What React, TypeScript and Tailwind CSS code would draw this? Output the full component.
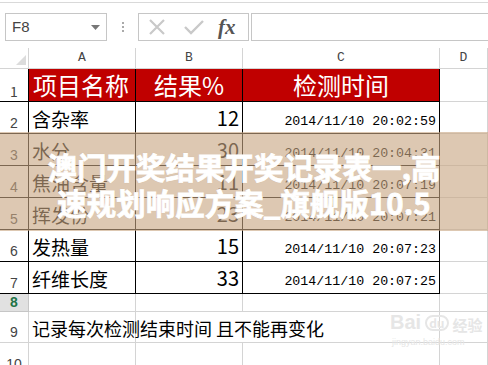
import React from 'react'

const cjk = { fontFamily: '"Noto Sans CJK SC", "Liberation Sans", sans-serif' }
const mono = { fontFamily: '"Liberation Mono", "DejaVu Sans Mono", monospace' }

type Row = { n: string; a: string; b: string; c: string }

const rows: Row[] = [
    { n: '2', a: '含杂率', b: '12', c: '2014/11/10 20:02:59' },
    { n: '3', a: '水分', b: '30', c: '2014/11/10 20:04:31' },
    { n: '4', a: '焦油含量', b: '11', c: '2014/11/10 20:07:19' },
    { n: '5', a: '挥发份', b: '23', c: '2014/11/10 20:07:21' },
    { n: '6', a: '发热量', b: '15', c: '2014/11/10 20:07:23' },
    { n: '7', a: '纤维长度', b: '33', c: '2014/11/10 20:07:25' },
]

const Toolbar = () => (
    <div>
        <div className='h-[3px] border-b border-[#d9d9d9]' />
        <div className='flex items-center pl-[5px] pt-[10px] h-[38px]'>
            <div className='w-[102px] h-[28px] border border-[#c6c6c6] flex items-center justify-between pl-[6px] pr-[6px]'>
                <span className='text-[15px] text-[#444]' style={{ fontFamily: '"Liberation Sans", sans-serif' }}>F8</span>
                <svg width='9' height='5' viewBox='0 0 9 5'>
                    <polygon points='0,0 9,0 4.5,5' fill='#777' />
                </svg>
            </div>
            <div className='w-[31px] flex flex-col items-center gap-[2px]'>
                <span className='w-[2px] h-[2px] bg-[#aaa]' />
                <span className='w-[2px] h-[2px] bg-[#aaa]' />
                <span className='w-[2px] h-[2px] bg-[#aaa]' />
            </div>
            <div className='w-[111px] h-[28px] border border-[#c6c6c6] flex items-center'>
                <svg width='18' height='16' viewBox='0 0 18 16' className='ml-[9px]'>
                    <path d='M2 1 L16 15 M16 1 L2 15' stroke='#c9c9c9' strokeWidth='2.2' fill='none' />
                </svg>
                <svg width='20' height='16' viewBox='0 0 20 16' className='ml-[18px]'>
                    <path d='M1 8 L7 14 L19 2' stroke='#c9c9c9' strokeWidth='2.4' fill='none' />
                </svg>
                <span className='ml-[14px] text-[21px] italic font-bold text-[#555] leading-none' style={{ fontFamily: '"Liberation Serif", serif' }}>fx</span>
            </div>
            <div className='ml-[2px] flex-1 h-[28px] border border-r-0 border-[#c6c6c6]' />
        </div>
    </div>
)

const App = () => {
    const grid = 'grid grid-cols-[29px_107px_107px_197px_1fr]'
    const g = 'border-r border-b border-[#d4d4d4]'
    const rowNum = 'flex items-end justify-center pb-[3px] text-[14px] text-[#444] leading-none'
    return (
        <div className='relative w-[488px] h-[365px] overflow-hidden bg-white' style={cjk}>
            <Toolbar />
            <div className='mt-[7px]'>
                {/* column headers */}
                <div className={`${grid} h-[21px]`}>
                    <div className={`${g} relative`}>
                        <svg width='10' height='10' viewBox='0 0 10 10' className='absolute right-[2px] bottom-[3px]'>
                            <polygon points='10,0 10,10 0,10' fill='#dcdcdc' />
                        </svg>
                    </div>
                    {['A', 'B', 'C', 'D'].map((l) => (
                        <div key={l} className={`${g} flex items-center justify-center text-[13px] text-[#444]`} style={mono}>{l}</div>
                    ))}
                </div>
                {/* row 1 header */}
                <div className={`${grid} h-[33px]`}>
                    <div className={`${rowNum} border-r border-b border-black`}>1</div>
                    <div className='bg-[#c00000] border-r border-b border-black text-white text-[24px] leading-none flex items-center pl-[4px]'>项目名称</div>
                    <div className='bg-[#c00000] border-r border-b border-black text-white text-[24px] leading-none flex items-center justify-center'>结果%</div>
                    <div className='bg-[#c00000] border-r border-b border-black text-white text-[24px] leading-none flex items-center justify-center'>检测时间</div>
                    <div className={g} />
                </div>
                {rows.map((r) => (
                    <div key={r.n} className={`${grid} h-[32px]`}>
                        <div className={`${rowNum} border-r border-b border-black`} style={{ fontFamily: '"Liberation Sans", sans-serif' }}>{r.n}</div>
                        <div className='border-r border-b border-black text-black text-[19px] leading-none flex items-end pb-[5px] pl-[3px]'>{r.a}</div>
                        <div className='border-r border-b border-black text-black text-[20px] leading-none flex items-end justify-end pb-[5px] pr-[3px]'>{r.b}</div>
                        <div className='border-r border-b border-black text-black text-[13.3px] leading-none flex items-end justify-end pb-[5px] pr-[3px]' style={mono}>{r.c}</div>
                        <div className={g} />
                    </div>
                ))}
                {/* row 8 selected */}
                <div className={`${grid} h-[18px]`}>
                    <div className='flex items-end justify-center pb-[2px] text-[14px] font-bold text-[#217346] leading-none bg-[#e1e1e1] border-r border-b border-[#c6c6c6]' style={{ fontFamily: '"Liberation Sans", sans-serif' }}>8</div>
                    <div className={g} />
                    <div className={g} />
                    <div className={g} />
                    <div className={g} />
                </div>
                <div className={`${grid} h-[31px]`}>
                    <div className={g + ' ' + rowNum} style={{ fontFamily: '"Liberation Sans", sans-serif' }}>9</div>
                    <div className={`${g} relative overflow-visible`}>
                        <span className='absolute left-[3px] bottom-[5px] whitespace-nowrap text-[18px] leading-none text-black'>记录每次检测结束时间 且不能再变化</span>
                    </div>
                    <div className='border-b border-[#d4d4d4]' />
                    <div className={g} />
                    <div className={g} />
                </div>
                <div className={`${grid} h-[32px]`}>
                    <div className={g + ' ' + rowNum} style={{ fontFamily: '"Liberation Sans", sans-serif' }}>10</div>
                    <div className={g} />
                    <div className={g} />
                    <div className={g} />
                    <div className={g} />
                </div>
            </div>

            {/* overlay title band */}
            <div className='absolute left-0 right-0 top-[132px] h-[99px] bg-[rgba(200,166,130,0.62)] flex flex-col items-center justify-center pt-[4px]'>
                <div className='text-white font-bold text-[29.5px] leading-[36px] text-center [-webkit-text-stroke:0.8px_white] [text-shadow:0_0_1px_rgba(120,90,60,0.35)]'>
                    澳门开奖结果开奖记录表一,高
                </div>
                <div className='text-white font-bold text-[29.5px] leading-[36px] text-center [-webkit-text-stroke:0.8px_white] [text-shadow:0_0_1px_rgba(120,90,60,0.35)]'>
                    速规划响应方案_旗舰版10.5
                </div>
            </div>

            {/* watermark */}
            <div className='absolute left-[390px] top-[312px] text-[#e6e6e6] leading-none'>
                <div className='flex items-end gap-[4px]'>
                    <span className='text-[20px] font-bold' style={{ fontFamily: '"Liberation Sans", sans-serif' }}>Bai</span>
                    <span className='text-[12px] font-bold border-2 border-[#e6e6e6] rounded-full px-[2px] mb-[1px]'>du</span>
                    <span className='text-[15px] font-bold'>经验</span>
                </div>
                <div className='text-[9px] mt-[6px] ml-[2px]' style={{ fontFamily: '"Liberation Sans", sans-serif' }}>jingyan.baidu.com</div>
            </div>
        </div>
    )
}

export default App
